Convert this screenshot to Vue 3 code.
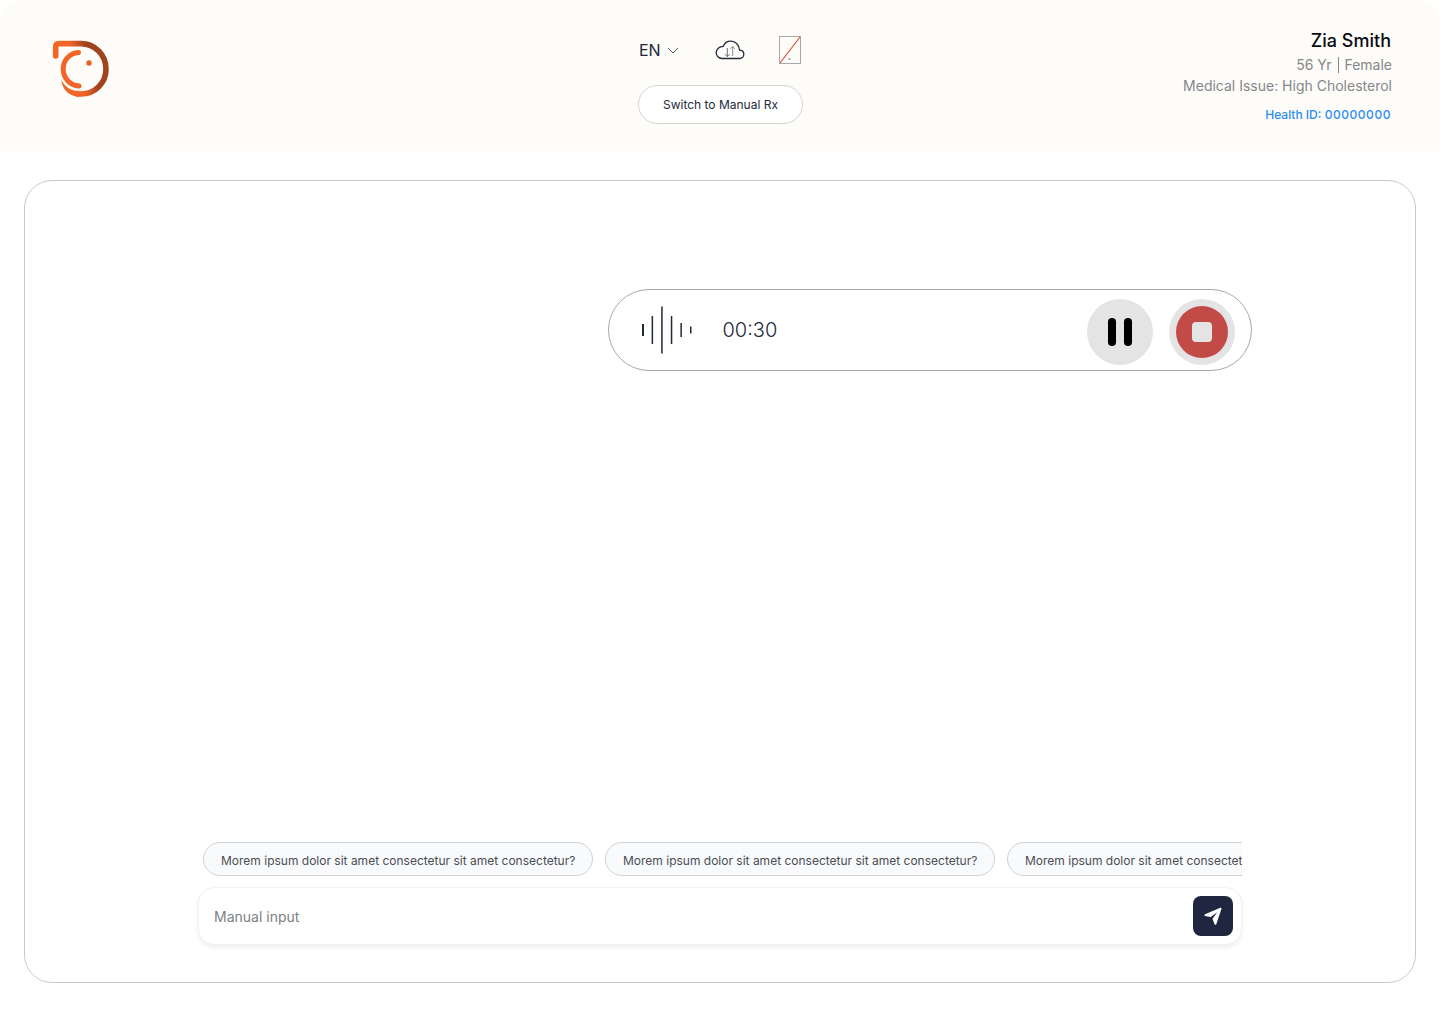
<template>
  <div class="page">
    <header class="topbar">
      <div class="logo">
        <svg width="60" height="60" viewBox="0 0 60 60" fill="none">
          <defs>
            <linearGradient id="ring" gradientUnits="userSpaceOnUse" x1="18" y1="4" x2="32" y2="0">
              <stop offset="0" stop-color="#f26526" />
              <stop offset="1" stop-color="#a0441f" />
            </linearGradient>
          </defs>
          <path d="M3.700 17V8Q3.700 4.600 7 4.600H29C43 4.600 54 16 54 30C54 44 43 55 29 55C27 55 25 54.800 24 54.500" stroke="url(#ring)" stroke-width="5.600" stroke-linecap="round" />
          <path d="M27 57.800C17 57.500 10 50 9.500 41C13 48 19 52 27 52.200Z" fill="#f26526" />
          <path d="M26.500 13.500C17 14 11.200 22 11.200 30C11.200 39 18 46.500 27 47" stroke="#f26526" stroke-width="5" stroke-linecap="round" />
          <circle cx="37" cy="24" r="2.700" fill="#ec5f25" />
        </svg>
      </div>

      <div class="tools">
        <div class="tool-row">
          <div class="lang">
            EN
            <svg width="12" height="7" viewBox="0 0 12 7" fill="none"><path d="M1 1l5 5 5-5" stroke="#555b6b" stroke-width="1" /></svg>
          </div>
          <svg class="cloud" width="30" height="20" viewBox="0 0 30 20" fill="none">
            <path d="M7 18.500H24.500C27 18.500 28.800 16.500 28.800 14.300C28.800 12 27 10.300 24.600 10.200C24.300 5 20.500 1.200 15.800 1.200C12.300 1.200 9.500 3.300 8.200 6.300C4.300 6.300 1.200 9.200 1.200 12.600C1.200 16 3.800 18.500 7 18.500Z" stroke="#23283a" stroke-width="1.300" />
            <path d="M12.300 8v8.500M10 14.200l2.300 2.300 2.300-2.300" stroke="#555b6b" stroke-width="0.900" />
            <path d="M17.700 16V6.500M15.400 8.800l2.300-2.300 2.300 2.300" stroke="#808490" stroke-width="0.900" />
          </svg>
          <svg class="broken" width="22" height="28" viewBox="0 0 22 28" fill="none">
            <rect x="0.500" y="0.500" width="21" height="27" fill="#fdfcf8" stroke="#a9a9a9" />
            <path d="M1 27L21 1" stroke="#d9432f" stroke-width="1.100" />
            <circle cx="10.500" cy="23" r="1.100" fill="#9a9a9a" />
          </svg>
        </div>
        <button class="switch-btn" type="button">Switch to Manual Rx</button>
      </div>

      <div class="patient">
        <div class="name">{{ patient.name }}</div>
        <div class="meta">{{ patient.age }} <span class="sep"></span> {{ patient.gender }}</div>
        <div class="meta issue">Medical Issue: {{ patient.issue }}</div>
        <div class="health-id">Health ID: <span class="id-num">{{ patient.healthId }}</span></div>
      </div>
    </header>

    <main class="card">
      <div class="recorder-row">
        <div class="recorder">
          <svg class="wave" width="52" height="48" viewBox="0 0 52 48">
            <rect
              v-for="(bar, i) in bars"
              :key="i"
              :x="i * 9.6"
              :y="24 - bar / 2"
              :width="i === 0 ? 2 : 1.5"
              :height="bar"
              fill="#23283a"
            />
          </svg>
          <span class="timer">00:30</span>
          <button class="round-btn pause" type="button" aria-label="Pause">
            <span></span><span></span>
          </button>
          <button class="round-btn stop" type="button" aria-label="Stop">
            <span class="stop-inner"><span class="stop-square"></span></span>
          </button>
        </div>
      </div>

      <div class="composer">
        <div class="chips">
          <button v-for="i in 3" :key="i" class="chip" type="button">
            Morem ipsum dolor sit amet consectetur sit amet consectetur?
          </button>
        </div>
        <div class="input-box">
          <input class="manual" type="text" placeholder="Manual input" />
          <button class="send" type="button" aria-label="Send">
            <svg width="20" height="20" viewBox="0 0 20 20" fill="#fff">
              <path d="M2 8.300L17.300 1.800C18 1.500 18.700 2.200 18.400 2.900L13.300 18.200C13 19 12 19 11.600 18.300L9.500 12.800L14.300 6.200L7.600 10.900L2 9.900C1.200 9.700 1.200 8.700 2 8.300Z" />
            </svg>
          </button>
        </div>
      </div>
    </main>
  </div>
</template>

<script setup>
const patient = {
  name: 'Zia Smith',
  age: '56 Yr',
  gender: 'Female',
  issue: 'High Cholesterol',
  healthId: '00000000'
}

const bars = [12, 28, 47, 28, 14, 7]
</script>

<style>
html,
body {
  margin: 0;
  background: #fff;
}
</style>

<style scoped>
.page {
  width: 1440px;
  height: 1024px;
  border-radius: 20px;
  overflow: hidden;
  background: #fff;
  font-family: Inter, "Liberation Sans", sans-serif;
  display: flex;
  flex-direction: column;
}

.topbar {
  height: 151px;
  flex: none;
  box-sizing: border-box;
  background: #fdfcf8;
  display: grid;
  grid-template-columns: 1fr 166px 1fr;
  padding: 0 48px 0 50px;
}

.logo {
  padding: 39px 0 0 2px;
}

.tools {
  padding-top: 36px;
  display: flex;
  flex-direction: column;
  align-items: flex-start;
}

.tool-row {
  display: flex;
  align-items: center;
  height: 28px;
  width: 100%;
}

.lang {
  display: flex;
  align-items: center;
  gap: 6px;
  margin-left: 1px;
  font-size: 16px;
  color: #23283a;
}

.cloud {
  margin-left: 36px;
}

.broken {
  margin-left: 34px;
}

.switch-btn {
  margin-top: 21px;
  width: 165px;
  height: 39px;
  border: 1px solid #d4d4d4;
  border-radius: 20px;
  background: #fff;
  font: 400 12px Inter, "Liberation Sans", sans-serif;
  color: #23283a;
}

.patient {
  text-align: right;
  padding-top: 30px;
}

.name {
  margin-right: 1px;
  font-size: 18px;
  line-height: 22px;
  font-weight: 500;
  color: #0b0b12;
}

.meta {
  margin-top: 3px;
  font-size: 14px;
  line-height: 20px;
  color: #85878d;
}

.issue {
  margin-top: 1px;
}

.sep {
  display: inline-block;
  width: 1px;
  height: 16px;
  margin: 0 2px;
  background: #85878d;
  vertical-align: -3px;
}

.health-id {
  margin: 10px 1px 0 0;
  font-size: 12px;
  line-height: 18px;
  font-weight: 500;
  color: #2b8cf3;
}

.id-num {
  letter-spacing: 0.55px;
}

.card {
  margin: 29px 24px 0;
  height: 803px;
  box-sizing: border-box;
  border: 1px solid #c9c9c9;
  border-radius: 28px;
  display: flex;
  flex-direction: column;
  padding: 108px 0 37px;
}

.recorder-row {
  display: flex;
  justify-content: flex-end;
  padding-right: 163px;
}

.recorder {
  width: 644px;
  height: 82px;
  box-sizing: border-box;
  border: 1px solid #a8a8a8;
  border-radius: 41px;
  display: flex;
  align-items: center;
  padding: 0 16px 0 33px;
}

.wave {
  flex: none;
}

.timer {
  margin-left: 28.500px;
  font-size: 20px;
  font-weight: 300;
  color: #23283a;
}

.round-btn {
  width: 66px;
  height: 66px;
  margin-top: 4px;
  border: 0;
  border-radius: 50%;
  padding: 0;
  background: #e4e4e4;
  display: flex;
  align-items: center;
  justify-content: center;
}

.pause {
  margin-left: auto;
  gap: 8px;
}

.pause span {
  width: 8px;
  height: 28px;
  border-radius: 4px;
  background: #000;
}

.stop {
  margin-left: 16px;
}

.stop-inner {
  width: 52px;
  height: 52px;
  border-radius: 50%;
  background: #c34b47;
  display: flex;
  align-items: center;
  justify-content: center;
}

.stop-square {
  width: 20px;
  height: 20px;
  border-radius: 4px;
  background: #e4e4e4;
}

.composer {
  margin: auto auto 0;
  width: 1044px;
}

.chips {
  display: flex;
  gap: 12px;
  padding-left: 5px;
  overflow: hidden;
}

.chip {
  flex: none;
  width: 390px;
  height: 34px;
  box-sizing: border-box;
  padding: 2px 0 0 17px;
  border: 1px solid #cfd2d6;
  border-radius: 17px;
  background: #f9fafb;
  font: 400 12px Inter, "Liberation Sans", sans-serif;
  color: #4a4d55;
  text-align: left;
  white-space: nowrap;
}

.input-box {
  margin-top: 11px;
  height: 58px;
  box-sizing: border-box;
  border: 1px solid #f2f2f2;
  border-radius: 16px;
  background: #fff;
  box-shadow: 0 2px 4px rgba(0, 0, 0, 0.08);
  display: flex;
  align-items: center;
  padding: 0 8px 0 13px;
}

.manual {
  flex: 1;
  border: 0;
  outline: 0;
  background: transparent;
  font: 400 14px Inter, "Liberation Sans", sans-serif;
  color: #23283a;
}

.manual::placeholder {
  color: #7d7f85;
  opacity: 1;
}

.send {
  width: 40px;
  height: 40px;
  border: 0;
  border-radius: 8px;
  padding: 0;
  background: #1f2640;
  display: flex;
  align-items: center;
  justify-content: center;
}
</style>
